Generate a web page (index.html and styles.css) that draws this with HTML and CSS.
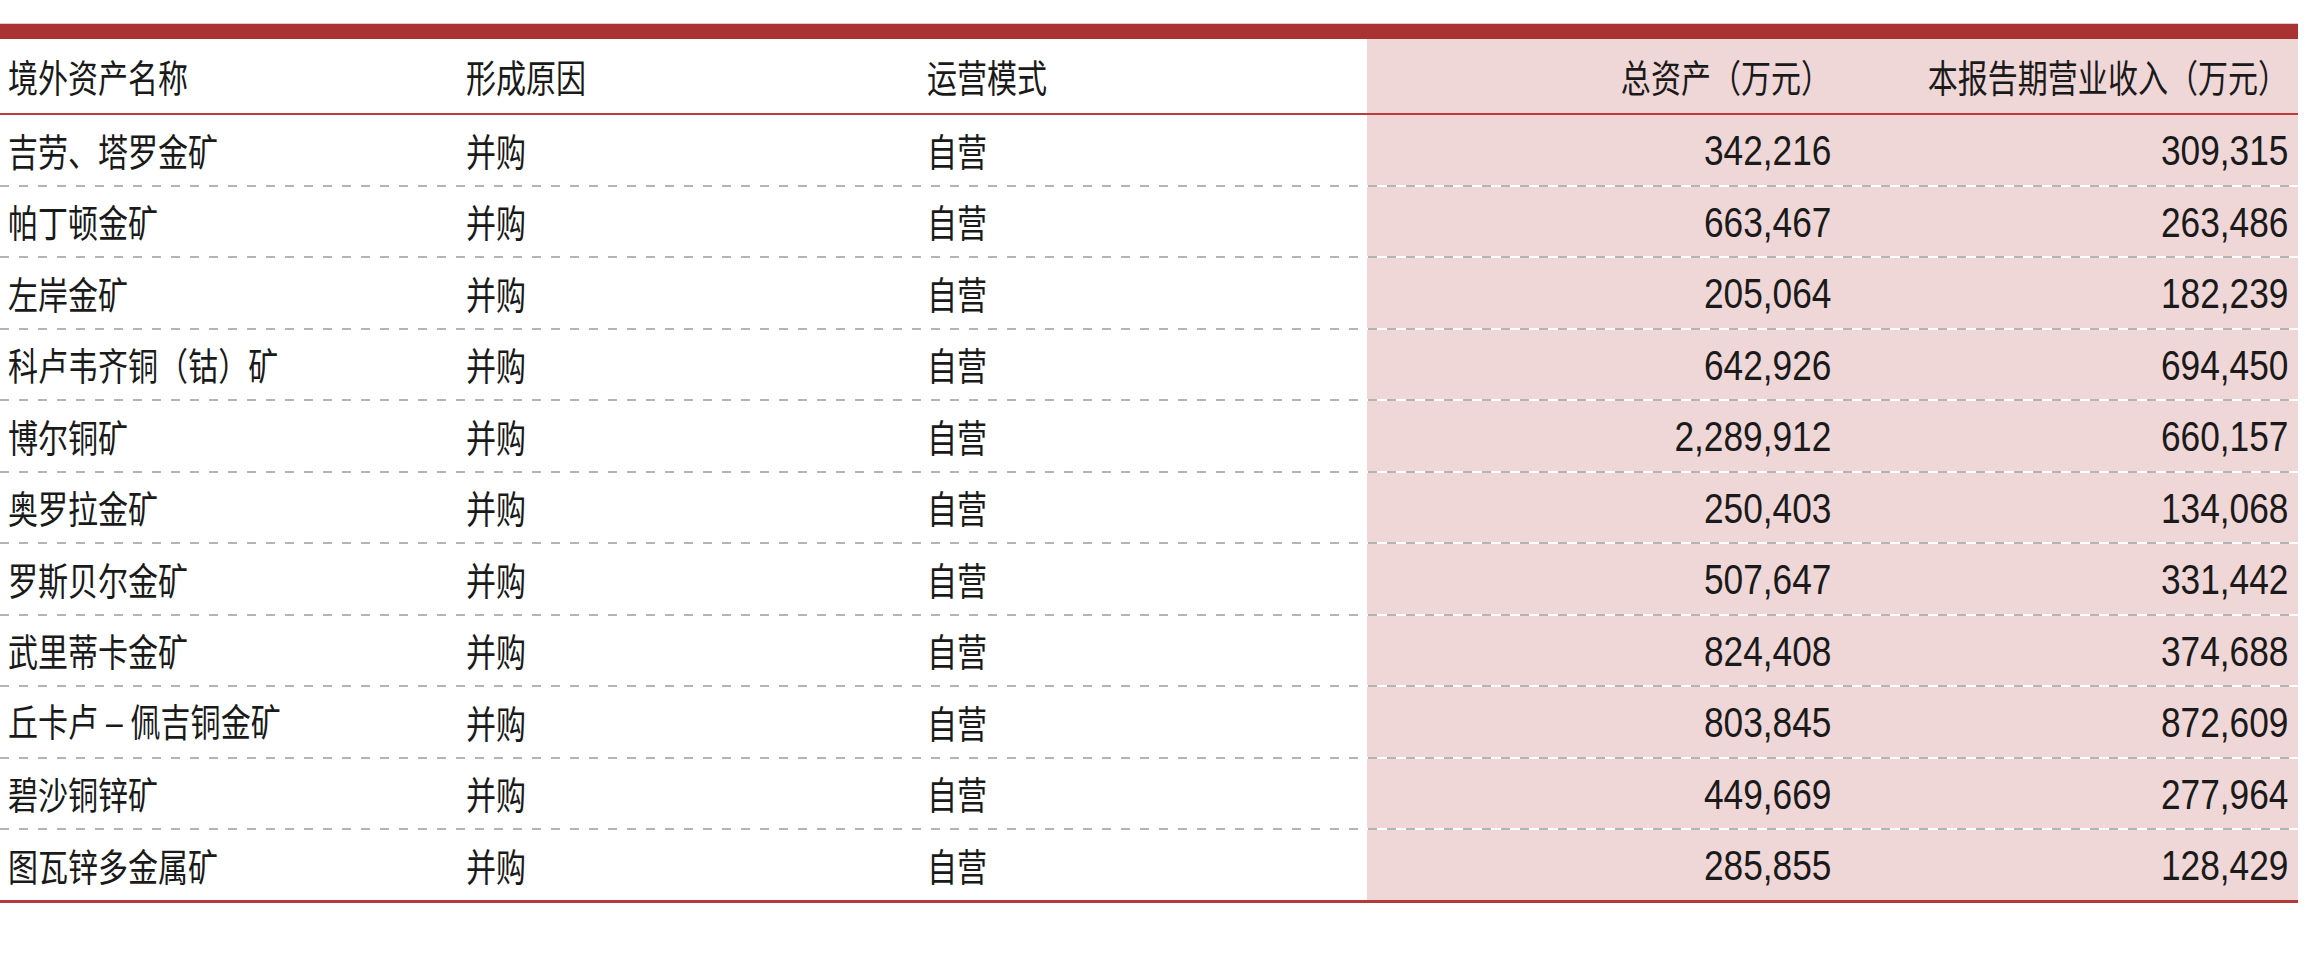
FILE: index.html
```html
<!DOCTYPE html>
<html lang="zh-CN">
<head>
<meta charset="utf-8">
<title>境外资产</title>
<link rel="stylesheet" href="styles.css">
</head>
<body>
<div class="sheet">
  <div class="topbar"></div>
  <div class="table">
    <div class="row head">
      <div class="cell"><span class="t">境外资产名称</span></div>
      <div class="cell"><span class="t">形成原因</span></div>
      <div class="cell"><span class="t">运营模式</span></div>
      <div class="cell num"><span class="t">总资产（万元）</span></div>
      <div class="cell num"><span class="t">本报告期营业收入（万元）</span></div>
    </div>
    <div class="row">
      <div class="cell"><span class="t">吉劳、塔罗金矿</span></div>
      <div class="cell"><span class="t">并购</span></div>
      <div class="cell"><span class="t">自营</span></div>
      <div class="cell num"><span class="n">342,216</span></div>
      <div class="cell num"><span class="n">309,315</span></div>
    </div>
    <div class="row">
      <div class="cell"><span class="t">帕丁顿金矿</span></div>
      <div class="cell"><span class="t">并购</span></div>
      <div class="cell"><span class="t">自营</span></div>
      <div class="cell num"><span class="n">663,467</span></div>
      <div class="cell num"><span class="n">263,486</span></div>
    </div>
    <div class="row">
      <div class="cell"><span class="t">左岸金矿</span></div>
      <div class="cell"><span class="t">并购</span></div>
      <div class="cell"><span class="t">自营</span></div>
      <div class="cell num"><span class="n">205,064</span></div>
      <div class="cell num"><span class="n">182,239</span></div>
    </div>
    <div class="row">
      <div class="cell"><span class="t">科卢韦齐铜（钴）矿</span></div>
      <div class="cell"><span class="t">并购</span></div>
      <div class="cell"><span class="t">自营</span></div>
      <div class="cell num"><span class="n">642,926</span></div>
      <div class="cell num"><span class="n">694,450</span></div>
    </div>
    <div class="row">
      <div class="cell"><span class="t">博尔铜矿</span></div>
      <div class="cell"><span class="t">并购</span></div>
      <div class="cell"><span class="t">自营</span></div>
      <div class="cell num"><span class="n">2,289,912</span></div>
      <div class="cell num"><span class="n">660,157</span></div>
    </div>
    <div class="row">
      <div class="cell"><span class="t">奥罗拉金矿</span></div>
      <div class="cell"><span class="t">并购</span></div>
      <div class="cell"><span class="t">自营</span></div>
      <div class="cell num"><span class="n">250,403</span></div>
      <div class="cell num"><span class="n">134,068</span></div>
    </div>
    <div class="row">
      <div class="cell"><span class="t">罗斯贝尔金矿</span></div>
      <div class="cell"><span class="t">并购</span></div>
      <div class="cell"><span class="t">自营</span></div>
      <div class="cell num"><span class="n">507,647</span></div>
      <div class="cell num"><span class="n">331,442</span></div>
    </div>
    <div class="row">
      <div class="cell"><span class="t">武里蒂卡金矿</span></div>
      <div class="cell"><span class="t">并购</span></div>
      <div class="cell"><span class="t">自营</span></div>
      <div class="cell num"><span class="n">824,408</span></div>
      <div class="cell num"><span class="n">374,688</span></div>
    </div>
    <div class="row">
      <div class="cell"><span class="t">丘卡卢<span class="dash">–</span>佩吉铜金矿</span></div>
      <div class="cell"><span class="t">并购</span></div>
      <div class="cell"><span class="t">自营</span></div>
      <div class="cell num"><span class="n">803,845</span></div>
      <div class="cell num"><span class="n">872,609</span></div>
    </div>
    <div class="row">
      <div class="cell"><span class="t">碧沙铜锌矿</span></div>
      <div class="cell"><span class="t">并购</span></div>
      <div class="cell"><span class="t">自营</span></div>
      <div class="cell num"><span class="n">449,669</span></div>
      <div class="cell num"><span class="n">277,964</span></div>
    </div>
    <div class="row last">
      <div class="cell"><span class="t">图瓦锌多金属矿</span></div>
      <div class="cell"><span class="t">并购</span></div>
      <div class="cell"><span class="t">自营</span></div>
      <div class="cell num"><span class="n">285,855</span></div>
      <div class="cell num"><span class="n">128,429</span></div>
    </div>
  </div>
</div>
</body>
</html>
```

FILE: styles.css
```css
html, body {
  margin: 0;
  padding: 0;
  background: #ffffff;
}

.sheet {
  width: 2298px;
  padding-top: 24px;
  font-family: "Noto Sans CJK SC", "Liberation Sans", sans-serif;
  color: #1a1a1a;
}

.topbar {
  height: 15px;
  background: #a93233;
  box-shadow: 0 -1px 0 #e6c9c9;
}

.table {
  display: flex;
  flex-direction: column;
  border-bottom: 3px solid #b53a3b;
}

.row {
  display: grid;
  grid-template-columns: 458px 461px 448px 474px 457px;
  height: 69.5px;
  padding-bottom: 2px;
  background: repeating-linear-gradient(90deg, #b4b4b4 0 9.5px, #ffffff 9.5px 19px) left bottom / 100% 2px no-repeat;
}

.row.head {
  height: 74px;
  padding-bottom: 0;
  background: none;
  border-bottom: 2px solid #c0393b;
}

.row.last {
  padding-bottom: 0;
  background: none;
}

.cell {
  display: flex;
  align-items: center;
  padding: 0 8px;
  overflow: visible;
  white-space: nowrap;
}

.cell.num {
  justify-content: flex-end;
  padding: 0 10px 0 0;
  background: #efd6d7;
}

.t {
  display: inline-block;
  font-size: 38px;
  line-height: 1;
  transform: scaleX(0.79);
  transform-origin: left center;
}

.num .t {
  transform-origin: right center;
}

.dash {
  font-family: "Liberation Sans", Arial, sans-serif;
  margin: 0 10px;
}

.n {
  display: inline-block;
  font-family: "Liberation Sans", Arial, sans-serif;
  font-size: 43px;
  line-height: 1;
  transform: scaleX(0.82);
  transform-origin: right center;
  margin-top: 2px;
}
```
